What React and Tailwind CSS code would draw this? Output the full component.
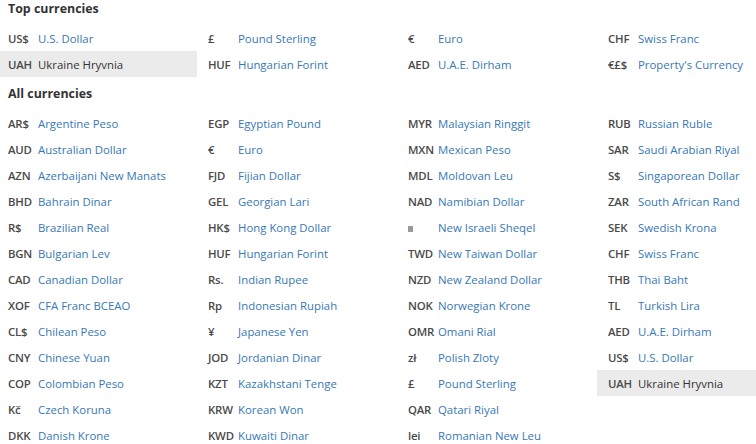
const TOP = [
  [
    { code: "US$", name: "U.S. Dollar" },
    { code: "UAH", name: "Ukraine Hryvnia", active: true },
  ],
  [
    { code: "£", name: "Pound Sterling" },
    { code: "HUF", name: "Hungarian Forint" },
  ],
  [
    { code: "€", name: "Euro" },
    { code: "AED", name: "U.A.E. Dirham" },
  ],
  [
    { code: "CHF", name: "Swiss Franc" },
    { code: "€£$", name: "Property's Currency" },
  ],
];

const ALL = [
  [
    { code: "AR$", name: "Argentine Peso" },
    { code: "AUD", name: "Australian Dollar" },
    { code: "AZN", name: "Azerbaijani New Manats" },
    { code: "BHD", name: "Bahrain Dinar" },
    { code: "R$", name: "Brazilian Real" },
    { code: "BGN", name: "Bulgarian Lev" },
    { code: "CAD", name: "Canadian Dollar" },
    { code: "XOF", name: "CFA Franc BCEAO" },
    { code: "CL$", name: "Chilean Peso" },
    { code: "CNY", name: "Chinese Yuan" },
    { code: "COP", name: "Colombian Peso" },
    { code: "Kč", name: "Czech Koruna" },
    { code: "DKK", name: "Danish Krone" },
  ],
  [
    { code: "EGP", name: "Egyptian Pound" },
    { code: "€", name: "Euro" },
    { code: "FJD", name: "Fijian Dollar" },
    { code: "GEL", name: "Georgian Lari" },
    { code: "HK$", name: "Hong Kong Dollar" },
    { code: "HUF", name: "Hungarian Forint" },
    { code: "Rs.", name: "Indian Rupee" },
    { code: "Rp", name: "Indonesian Rupiah" },
    { code: "¥", name: "Japanese Yen" },
    { code: "JOD", name: "Jordanian Dinar" },
    { code: "KZT", name: "Kazakhstani Tenge" },
    { code: "KRW", name: "Korean Won" },
    { code: "KWD", name: "Kuwaiti Dinar" },
  ],
  [
    { code: "MYR", name: "Malaysian Ringgit" },
    { code: "MXN", name: "Mexican Peso" },
    { code: "MDL", name: "Moldovan Leu" },
    { code: "NAD", name: "Namibian Dollar" },
    { code: "", name: "New Israeli Sheqel", box: true },
    { code: "TWD", name: "New Taiwan Dollar" },
    { code: "NZD", name: "New Zealand Dollar" },
    { code: "NOK", name: "Norwegian Krone" },
    { code: "OMR", name: "Omani Rial" },
    { code: "zł", name: "Polish Zloty" },
    { code: "£", name: "Pound Sterling" },
    { code: "QAR", name: "Qatari Riyal" },
    { code: "lei", name: "Romanian New Leu" },
  ],
  [
    { code: "RUB", name: "Russian Ruble" },
    { code: "SAR", name: "Saudi Arabian Riyal" },
    { code: "S$", name: "Singaporean Dollar" },
    { code: "ZAR", name: "South African Rand" },
    { code: "SEK", name: "Swedish Krona" },
    { code: "CHF", name: "Swiss Franc" },
    { code: "THB", name: "Thai Baht" },
    { code: "TL", name: "Turkish Lira" },
    { code: "AED", name: "U.A.E. Dirham" },
    { code: "US$", name: "U.S. Dollar" },
    { code: "UAH", name: "Ukraine Hryvnia", active: true },
    { code: "", name: "" },
  ],
];

function Row({ item }) {
  return (
    <div
      className={`flex h-[26px] items-center pl-[11px] pt-[2px] text-[11.4px] ${
        item.active ? "bg-[#ebebeb]" : ""
      }`}
    >
      <span className="w-[30px] shrink-0 font-semibold tracking-[-0.2px] text-[#4a4a4a]">
        {item.box ? (
          <span className="inline-block h-[6px] w-[5px] bg-[#9a9a9a] align-middle" />
        ) : (
          item.code
        )}
      </span>
      <span className={item.active ? "text-[#333]" : "text-[#3778b6]"}>
        {item.name}
      </span>
    </div>
  );
}

function Columns({ cols }) {
  return (
    <div className="ml-[-3px] flex">
      {cols.map((col, i) => (
        <div key={i} className="w-[200px] shrink-0">
          {col.map((item, j) => (
            <Row key={j} item={item} />
          ))}
        </div>
      ))}
    </div>
  );
}

export default function App() {
  return (
    <div
      className="h-[444px] w-[756px] overflow-hidden bg-white"
      style={{ fontFamily: '"Open Sans", "Noto Sans", sans-serif' }}
    >
      <h2 className="h-[25px] pl-2 text-[12.4px] font-bold leading-[18px] text-[#333]">
        Top currencies
      </h2>
      <Columns cols={TOP} />
      <h2 className="h-[33px] pl-2 pt-2 text-[12.4px] font-bold leading-[18px] text-[#333]">
        All currencies
      </h2>
      <Columns cols={ALL} />
    </div>
  );
}
